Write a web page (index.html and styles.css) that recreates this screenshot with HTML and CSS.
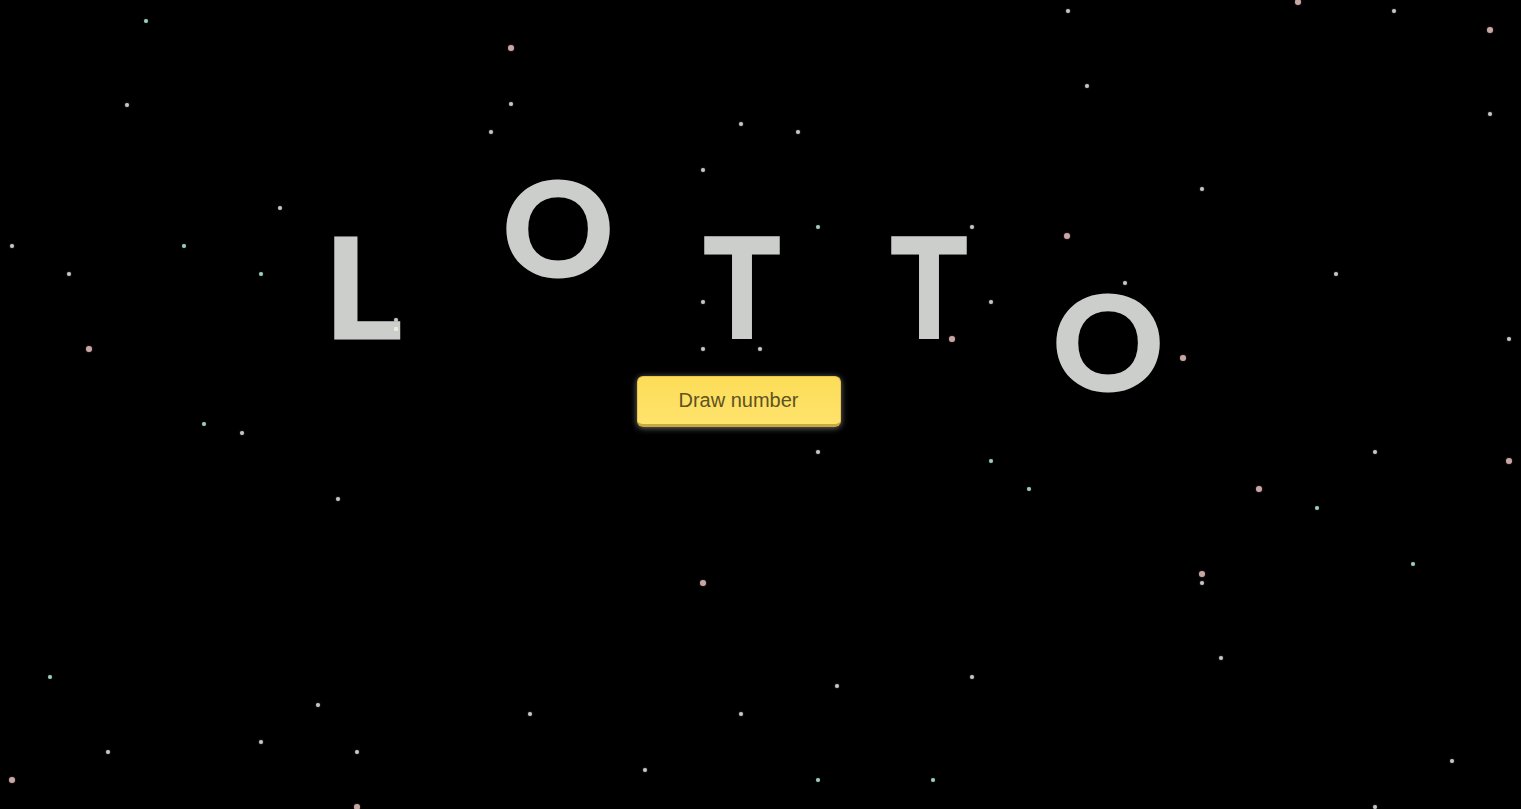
FILE: index.html
```html
<!DOCTYPE html>
<html lang="en">
<head>
<meta charset="utf-8">
<title>Lotto</title>
<link rel="stylesheet" href="styles.css">
</head>
<body>
<div class="sky">
  <span class="star t" style="left:146px;top:21px"></span>
  <span class="star w" style="left:127px;top:105px"></span>
  <span class="star p" style="left:1298px;top:2px"></span>
  <span class="star w" style="left:1394px;top:11px"></span>
  <span class="star p" style="left:1490px;top:30px"></span>
  <span class="star w" style="left:1490px;top:114px"></span>
  <span class="star w" style="left:1068px;top:11px"></span>
  <span class="star w" style="left:1087px;top:86px"></span>
  <span class="star p" style="left:511px;top:48px"></span>
  <span class="star w" style="left:511px;top:104px"></span>
  <span class="star w" style="left:491px;top:132px"></span>
  <span class="star w" style="left:741px;top:124px"></span>
  <span class="star w" style="left:798px;top:132px"></span>
  <span class="star w" style="left:703px;top:170px"></span>
  <span class="star w" style="left:12px;top:246px"></span>
  <span class="star w" style="left:69px;top:274px"></span>
  <span class="star t" style="left:184px;top:246px"></span>
  <span class="star t" style="left:261px;top:274px"></span>
  <span class="star w" style="left:280px;top:208px"></span>
  <span class="star p" style="left:89px;top:349px"></span>
  <span class="star t" style="left:204px;top:424px"></span>
  <span class="star w" style="left:242px;top:433px"></span>
  <span class="star w" style="left:396px;top:320px"></span>
  <span class="star y" style="left:396px;top:329px"></span>
  <span class="star t" style="left:818px;top:227px"></span>
  <span class="star w" style="left:972px;top:227px"></span>
  <span class="star p" style="left:1067px;top:236px"></span>
  <span class="star w" style="left:703px;top:302px"></span>
  <span class="star w" style="left:991px;top:302px"></span>
  <span class="star w" style="left:1125px;top:283px"></span>
  <span class="star w" style="left:703px;top:349px"></span>
  <span class="star w" style="left:760px;top:349px"></span>
  <span class="star p" style="left:952px;top:339px"></span>
  <span class="star w" style="left:1202px;top:189px"></span>
  <span class="star w" style="left:1336px;top:274px"></span>
  <span class="star p" style="left:1183px;top:358px"></span>
  <span class="star w" style="left:1509px;top:339px"></span>
  <span class="star w" style="left:338px;top:499px"></span>
  <span class="star p" style="left:703px;top:583px"></span>
  <span class="star t" style="left:50px;top:677px"></span>
  <span class="star w" style="left:318px;top:705px"></span>
  <span class="star w" style="left:530px;top:714px"></span>
  <span class="star w" style="left:741px;top:714px"></span>
  <span class="star w" style="left:108px;top:752px"></span>
  <span class="star w" style="left:261px;top:742px"></span>
  <span class="star w" style="left:357px;top:752px"></span>
  <span class="star p" style="left:12px;top:780px"></span>
  <span class="star w" style="left:645px;top:770px"></span>
  <span class="star p" style="left:357px;top:807px"></span>
  <span class="star w" style="left:818px;top:452px"></span>
  <span class="star t" style="left:991px;top:461px"></span>
  <span class="star t" style="left:1029px;top:489px"></span>
  <span class="star p" style="left:1259px;top:489px"></span>
  <span class="star t" style="left:1317px;top:508px"></span>
  <span class="star w" style="left:1375px;top:452px"></span>
  <span class="star p" style="left:1509px;top:461px"></span>
  <span class="star t" style="left:1413px;top:564px"></span>
  <span class="star p" style="left:1202px;top:574px"></span>
  <span class="star w" style="left:1202px;top:583px"></span>
  <span class="star w" style="left:1221px;top:658px"></span>
  <span class="star w" style="left:972px;top:677px"></span>
  <span class="star w" style="left:837px;top:686px"></span>
  <span class="star w" style="left:1452px;top:761px"></span>
  <span class="star t" style="left:818px;top:780px"></span>
  <span class="star t" style="left:933px;top:780px"></span>
  <span class="star w" style="left:1375px;top:807px"></span>
</div>

<main class="stage">
  <h1 class="title">
    <span class="letter low l1">L</span>
    <span class="letter high o1">O</span>
    <span class="letter low t1">T</span>
    <span class="letter low t2">T</span>
    <span class="letter lower o2">O</span>
  </h1>
  <button class="draw" type="button">Draw number</button>
</main>
</body>
</html>
```

FILE: styles.css
```css
html, body {
  margin: 0;
  padding: 0;
  height: 100%;
  background: #000;
  overflow: hidden;
}

body {
  position: relative;
  font-family: "Lato", "Liberation Sans", sans-serif;
}

.sky {
  position: absolute;
  inset: 0;
  z-index: 2;
  pointer-events: none;
}

.star {
  position: absolute;
  width: 4px;
  height: 4px;
  margin: -2px 0 0 -2px;
  border-radius: 50%;
  background: #c6c6c6;
  box-shadow: 0 0 1.5px rgba(200, 200, 200, 0.6);
}

.star.p {
  width: 6px;
  height: 6px;
  margin: -3px 0 0 -3px;
  background: #c8a6a3;
  box-shadow: 0 0 1.5px rgba(200, 166, 163, 0.6);
}

.star.t {
  width: 4px;
  height: 4px;
  background: #9ccabd;
  box-shadow: 0 0 1px rgba(156, 202, 189, 0.6);
}

.star.y {
  border-radius: 1px;
  background: #ececdc;
}

.stage {
  position: relative;
  z-index: 1;
  display: flex;
  flex-direction: column;
  align-items: center;
  padding-right: 44px;
  padding-top: 157px;
}

.title {
  margin: 0;
  display: flex;
  align-items: flex-start;
  font-family: "Lato", "Liberation Sans", sans-serif;
  font-weight: 700;
  font-size: 137px;
  line-height: 1;
  color: #cccecc;
  -webkit-text-stroke: 3px #cccecc;
}

.letter {
  display: block;
  box-sizing: border-box;
  width: 120px;
  text-align: center;
}

.letter.high { margin-top: 0; }
.letter.low { margin-top: 60px; }
.letter.lower { margin-top: 114px; }

.l1 {
  padding-right: 12px;
  transform: scaleX(1.08);
}
.o1 { margin-left: 69px; }
.t1 { margin-left: 64px; }
.t2 { margin-left: 67px; }
.o2 { margin-left: 59px; }
.t1, .t2 { transform: scaleX(0.93); }
.o1, .o2 { transform: scaleY(0.955); }

.draw {
  margin-top: -32px;
  width: 204px;
  height: 51px;
  border: 1px solid #e9c64a;
  border-bottom: 3px solid #c9a83c;
  border-radius: 6px;
  background: linear-gradient(#fddd58, #fee36c);
  box-shadow: 0 1px 6px rgba(255, 255, 255, 0.45);
  color: #5e5322;
  font-family: "Comic Sans MS", "Liberation Sans", sans-serif;
  font-size: 20px;
  padding: 0;
  cursor: pointer;
}
```
